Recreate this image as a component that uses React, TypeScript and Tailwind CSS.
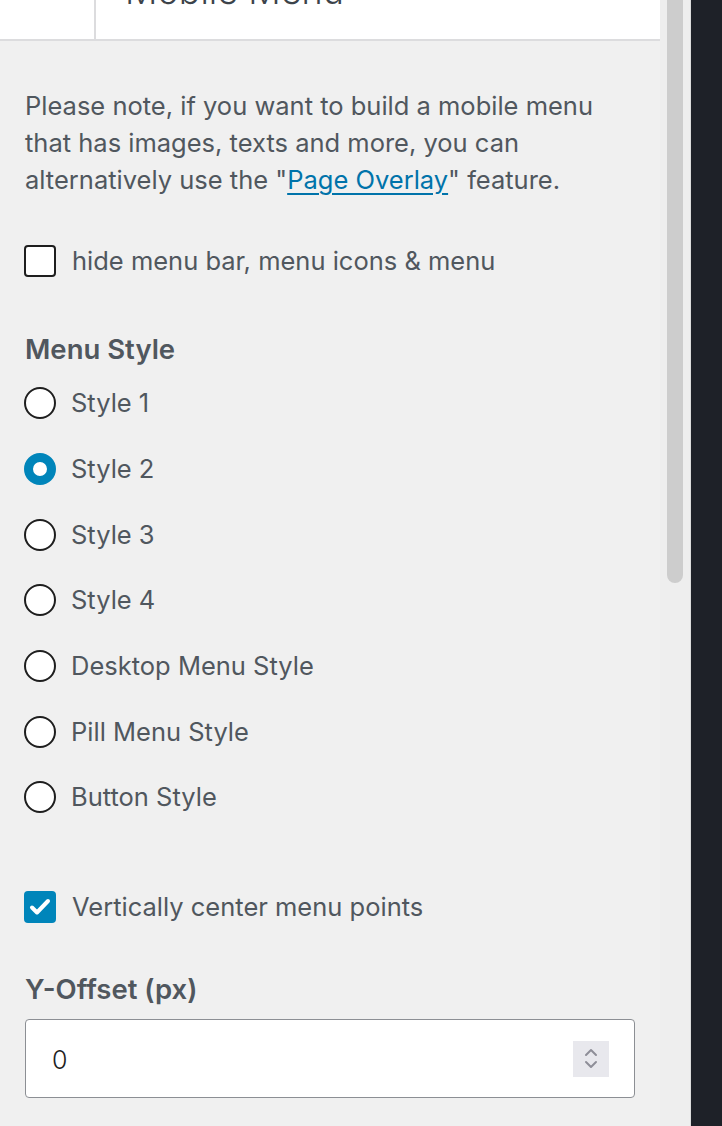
import React from "react";

const font = { fontFamily: "Inter, 'Noto Sans', 'Liberation Sans', sans-serif" };

function Radio({ label, checked }: { label: string; checked?: boolean }) {
  return (
    <div className="flex h-[65.67px] items-center">
      {checked ? (
        <span className="box-border h-[32px] w-[32px] shrink-0 rounded-full border-[9px] border-[#0085ba] bg-white" />
      ) : (
        <span className="box-border h-[32px] w-[32px] shrink-0 rounded-full border-2 border-[#1e1e1e] bg-white" />
      )}
      <span className="ml-[15px] text-[25.5px] leading-[32px] text-[#50575e]">{label}</span>
    </div>
  );
}

export default function App() {
  return (
    <div className="flex h-[1126px] w-[722px] overflow-hidden bg-[#f0f0f0]" style={font}>
      <div className="flex w-[660px] flex-col">
        <div className="flex h-[41px] shrink-0 border-b-2 border-[#dcdcde] bg-white">
          <div className="w-[96px] border-r-2 border-[#dcdcde]" />
          <div className="relative flex-1 overflow-hidden">
            <span className="absolute left-[29px] top-[-27px] whitespace-nowrap text-[36px] font-light leading-[36px] text-[#3c434a]">
              Mobile Menu
            </span>
          </div>
        </div>
        <div className="pl-[24px] pr-[25px]">
          <p className="ml-[1px] mt-[46px] whitespace-nowrap text-[25.5px] leading-[37px] text-[#50575e]">
            Please note, if you want to build a mobile menu
            <br />
            that has images, texts and more, you can
            <br />
            alternatively use the "
            <span className="text-[#0073aa] underline underline-offset-[4px]">Page Overlay</span>
            " feature.
          </p>
          <div className="mt-[46.5px] flex h-[32px] items-center">
            <span className="box-border h-[32px] w-[32px] shrink-0 rounded-[4px] border-2 border-[#1e1e1e] bg-white" />
            <span className="ml-[16px] text-[25.5px] leading-[32px] text-[#50575e]">
              hide menu bar, menu icons &amp; menu
            </span>
          </div>
          <div className="ml-[1px] mt-[56px] h-[32px] text-[27.5px] font-semibold leading-[32px] text-[#50575e]">
            Menu Style
          </div>
          <div className="mt-[6px] flex flex-col">
            <Radio label="Style 1" />
            <Radio label="Style 2" checked />
            <Radio label="Style 3" />
            <Radio label="Style 4" />
            <Radio label="Desktop Menu Style" />
            <Radio label="Pill Menu Style" />
            <Radio label="Button Style" />
          </div>
          <div className="mt-[61px] flex h-[32px] items-center">
            <span className="flex h-[32px] w-[32px] shrink-0 items-center justify-center rounded-[4px] bg-[#0085ba]">
              <svg width="24" height="24" viewBox="0 0 24 24" fill="none">
                <path d="M4 12.5l5 5L20 6" stroke="white" strokeWidth="4" strokeLinecap="round" strokeLinejoin="round" />
              </svg>
            </span>
            <span className="ml-[16px] text-[25.5px] leading-[32px] text-[#50575e]">
              Vertically center menu points
            </span>
          </div>
          <div className="ml-[1px] mt-[50px] h-[32px] text-[27.5px] font-semibold leading-[32px] text-[#50575e]">
            Y-Offset (px)
          </div>
          <div className="ml-[1px] mt-[14px] flex h-[79px] w-[610px] items-center rounded-[4px] border-[1.5px] border-[#8c8f94] bg-white pl-[26px] pr-[25px]">
            <span className="mt-[5px] flex-1 text-[25px] font-light text-[#1e1e1e]">0</span>
            <span className="flex h-[36px] w-[36px] flex-col items-center justify-center gap-[3px] bg-[#e8e8ed]">
              <svg width="14" height="9" viewBox="0 0 14 9" fill="none">
                <path d="M2 7l5-5 5 5" stroke="#8e8e98" strokeWidth="2" strokeLinecap="round" strokeLinejoin="round" />
              </svg>
              <svg width="14" height="9" viewBox="0 0 14 9" fill="none">
                <path d="M2 2l5 5 5-5" stroke="#8e8e98" strokeWidth="2" strokeLinecap="round" strokeLinejoin="round" />
              </svg>
            </span>
          </div>
        </div>
      </div>
      <div className="w-[30px] bg-[#eeeeee] pl-[7px]">
        <div className="h-[583px] w-[16px] rounded-b-[8px] bg-[#cdcdcd]" />
      </div>
      <div className="w-[1px] bg-[#dcdcdc]" />
      <div className="flex-1 bg-[#1e2128]" />
    </div>
  );
}
